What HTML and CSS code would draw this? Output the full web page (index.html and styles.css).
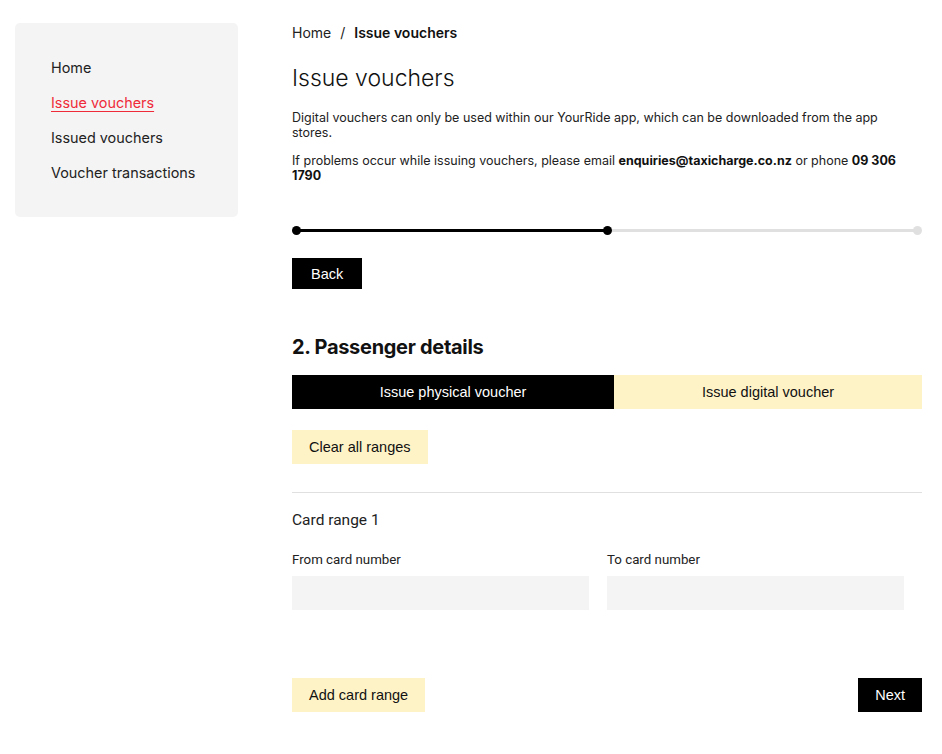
FILE: index.html
```html
<!DOCTYPE html>
<html lang="en">
<head>
<meta charset="utf-8">
<title>Issue vouchers</title>
<link rel="stylesheet" href="styles.css">
</head>
<body>
<div class="layout">
  <aside class="sidebar">
    <nav class="nav">
      <a class="nav-item" href="#">Home</a>
      <a class="nav-item active" href="#">Issue vouchers</a>
      <a class="nav-item" href="#">Issued vouchers</a>
      <a class="nav-item" href="#">Voucher transactions</a>
    </nav>
  </aside>
  <main class="main">
    <div class="breadcrumb"><span>Home</span><span class="sep">/</span><strong>Issue vouchers</strong></div>
    <h1 class="title">Issue vouchers</h1>
    <p class="text">Digital vouchers can only be used within our YourRide app, which can be downloaded from the app stores.</p>
    <p class="text">If problems occur while issuing vouchers, please email <strong>enquiries@taxicharge.co.nz</strong> or phone <strong>09 306 1790</strong></p>

    <div class="progress">
      <div class="seg done"></div>
      <div class="seg"></div>
      <span class="dot d1"></span>
      <span class="dot d2"></span>
      <span class="dot d3"></span>
    </div>

    <div class="row-back"><button class="btn btn-dark">Back</button></div>

    <h2 class="section">2. Passenger details</h2>
    <div class="toggle">
      <button class="tab tab-on">Issue physical voucher</button>
      <button class="tab">Issue digital voucher</button>
    </div>

    <div class="row-clear"><button class="btn btn-yellow">Clear all ranges</button></div>

    <hr class="divider">

    <div class="range-title">Card range 1</div>
    <div class="fields">
      <label class="field"><span class="label">From card number</span><input class="input" type="text"></label>
      <label class="field"><span class="label">To card number</span><input class="input" type="text"></label>
    </div>

    <div class="footer">
      <button class="btn btn-yellow">Add card range</button>
      <button class="btn btn-dark">Next</button>
    </div>
  </main>
</div>
</body>
</html>
```
FILE: styles.css
```css
* { box-sizing: border-box; }
html, body { margin: 0; padding: 0; background: #fff; }
body { font-family: Inter, "Noto Sans", sans-serif; color: #1a1a1a; }

.layout {
  display: flex;
  align-items: flex-start;
  padding: 23px 20px 0 15px;
  gap: 54px;
}

.sidebar {
  width: 223px;
  flex: none;
  background: #f4f4f4;
  border-radius: 5px;
  padding: 36px 0 36px 36px;
}
.nav { display: flex; flex-direction: column; gap: 18px; }
.nav-item {
  font-size: 14.4px;
  line-height: 17px;
  color: #222;
  text-decoration: none;
}
.nav-item.active { color: #ef2b3a; text-decoration: underline; text-underline-offset: 3px; }

.main { flex: 1; min-width: 0; }

.breadcrumb {
  font-size: 14px;
  line-height: 17px;
  margin-top: 1px;
  color: #222;
}
.breadcrumb .sep { margin: 0 9px; }
.breadcrumb strong { font-weight: 600; color: #111; }

.title {
  font-size: 23px;
  font-weight: 300;
  line-height: 28px;
  margin: 23px 0 18px;
  color: #111;
}

.text {
  font-size: 12.5px;
  line-height: 15px;
  margin: 0 0 13px;
  padding-right: 20px;
  color: #222;
}
.text strong { font-weight: 700; color: #111; }

.progress {
  position: relative;
  display: flex;
  margin: 42px 0 0;
  padding: 0 5px;
  height: 10px;
  align-items: center;
}
.seg { flex: 1; height: 3px; background: #e0e0e0; }
.seg.done { background: #000; }
.dot {
  position: absolute;
  top: 1px;
  width: 9px; height: 9px;
  border-radius: 50%;
  background: #000;
}
.d1 { left: 0; }
.d2 { left: calc(50% - 4px); }
.d3 { right: 0; background: #e0e0e0; }

.row-back { margin-top: 23px; }

.btn {
  border: 0;
  font-family: "Liberation Sans", Arial, sans-serif;
  font-size: 14.5px;
  height: 34px;
  padding: 0 17px;
  cursor: pointer;
}
.btn-dark { background: #000; color: #fff; }
.row-back .btn { height: 31px; padding: 0 19px; }
.btn-yellow { background: #fef3c7; color: #111; }

.section {
  font-family: Inter, Roboto, sans-serif;
  font-size: 20px;
  font-weight: 700;
  letter-spacing: -0.3px;
  line-height: 24px;
  margin: 46px 0 16px;
  color: #111;
}

.toggle { display: flex; }
.tab {
  flex: 1;
  height: 34px;
  border: 0;
  background: #fef3c7;
  color: #111;
  font-family: "Liberation Sans", Arial, sans-serif;
  font-size: 14.5px;
  cursor: pointer;
}
.tab-on { background: #000; color: #fff; flex: 0 0 322px; }

.row-clear { margin-top: 21px; }

.divider {
  border: 0;
  border-top: 1px solid #e0e0e0;
  margin: 28px 0 0;
}

.range-title {
  font-family: Roboto, Inter, sans-serif;
  font-size: 15.5px;
  line-height: 17px;
  margin-top: 19px;
  color: #222;
}

.fields {
  display: grid;
  grid-template-columns: 297px 297px;
  column-gap: 18px;
  margin-top: 23px;
}
.field { display: flex; flex-direction: column; }
.label {
  font-family: Roboto, Inter, sans-serif;
  font-size: 13.3px;
  line-height: 15px;
  color: #222;
  margin-bottom: 9px;
}
.input {
  height: 34px;
  border: 0;
  background: #f4f4f4;
  font-size: 14px;
  padding: 0 10px;
}

.footer {
  display: flex;
  justify-content: space-between;
  margin-top: 68px;
}
```
